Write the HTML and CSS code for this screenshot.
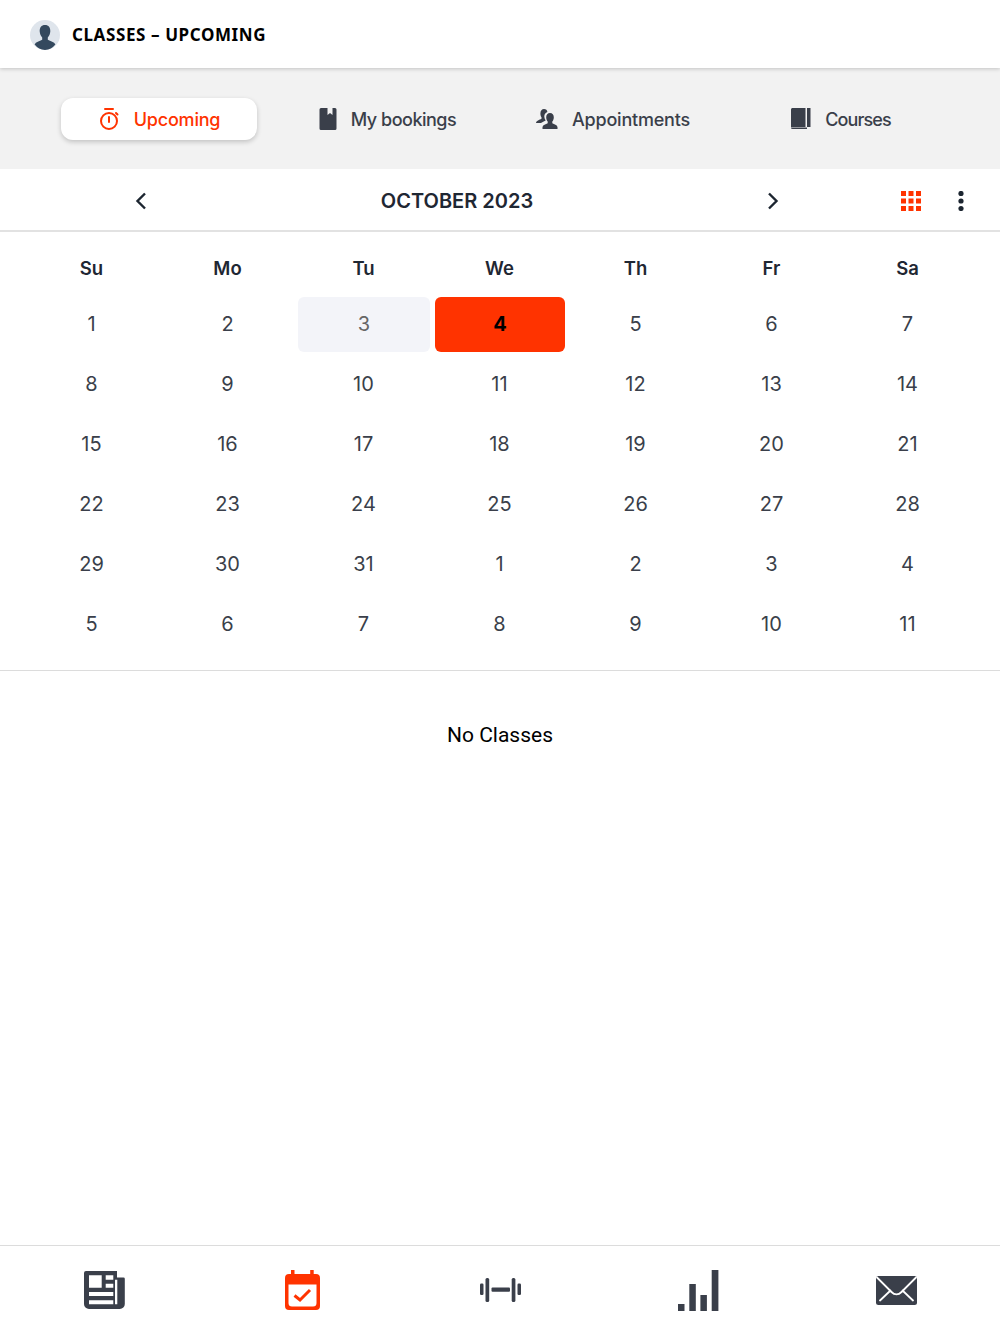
FILE: index.html
```html
<!DOCTYPE html>
<html>
<head>
    <title>Classes - Upcoming</title>
    <link rel="stylesheet" href="styles.css">
</head>
<body>
    <div class="page">
        <header class="top-bar">
            <svg class="avatar" viewBox="0 0 30 30">
                <circle cx="15" cy="15" r="15" fill="#dfe5ec"/>
                <path d="M15 5c3.6 0 5.6 2.7 5.3 6.600-.2 2.600-1.200 4.600-2.500 5.900v2.200c2.700 1.200 6.400 2.300 7.600 4.700A15 15 0 0 1 15 30a15 15 0 0 1-10.400-5.600c1.200-2.400 4.900-3.500 7.600-4.700v-2.200c-1.300-1.300-2.300-3.300-2.500-5.900C9.400 7.700 11.400 5 15 5z" fill="#34495e"/>
            </svg>
            <h1>CLASSES – UPCOMING</h1>
        </header>

        <nav class="tabs">
            <a class="tab active">
                <svg class="tab-icon" width="22" height="24" viewBox="0 0 22 24" fill="none" stroke="#ff3300" stroke-width="2">
                    <circle cx="11" cy="14" r="8"/>
                    <path d="M7 2h8M11 10v5M18 6l1.500 1.500" stroke-linecap="round"/>
                </svg>
                Upcoming
            </a>
            <a class="tab tab-bookings">
                <svg class="tab-icon" width="18" height="22" viewBox="0 0 18 22">
                    <path d="M2 0h6.500v7l2.500-2 2.500 2V0H16a1.500 1.500 0 0 1 1.500 1.500v19A1.500 1.500 0 0 1 16 22H2a1.500 1.500 0 0 1-1.500-1.500v-19A1.500 1.500 0 0 1 2 0z" fill="#3a3f4a"/>
                </svg>
                My bookings
            </a>
            <a class="tab">
                <svg class="tab-icon" width="22" height="20" viewBox="0 0 22 20">
                    <path d="M8 0c2 0 3.200 1.300 3.400 3-2 .6-3.200 2.400-3.100 4.700.1 1.500.6 2.800 1.400 3.800-1.800.9-3.300 1.500-4.700 2.500H0c.2-2.300 3.400-3 5.500-4.200V8.300C4.700 7.400 4.400 6 4.400 4.500 4.400 1.700 5.900 0 8 0z" fill="#3a3f4a"/>
                    <path d="M14 4c2.400 0 3.800 1.800 3.800 4.200 0 1.700-.5 3.200-1.500 4.300v1.800c2 1 4.700 1.500 5.200 3.700v2H6.500v-2c.5-2.200 3.200-2.700 5.200-3.700v-1.800c-1-1.100-1.500-2.600-1.500-4.300C10.200 5.800 11.600 4 14 4z" fill="#3a3f4a"/>
                </svg>
                Appointments
            </a>
            <a class="tab tab-courses">
                <svg class="tab-icon" width="20" height="22" viewBox="0 0 20 22">
                    <path d="M1.500 0H14.500V19H1.500C.7 19 0 19.500 0 20V1.500C0 .7.7 0 1.500 0z" fill="#3a3f4a"/>
                    <path d="M16 0h3.500v19H16zM0 20.500C0 20 .7 19.600 1.500 19.600H16v1.400H1.500z" fill="#3a3f4a"/>
                </svg>
                Courses
            </a>
        </nav>

        <div class="month-bar">
            <button class="chevron">
                <svg width="12" height="18" viewBox="0 0 12 18" fill="none" stroke="#1c2530" stroke-width="2.400"><path d="M10 1.500 2.500 9l7.500 7.500"/></svg>
            </button>
            <div class="month-title">OCTOBER 2023</div>
            <button class="chevron">
                <svg width="12" height="18" viewBox="0 0 12 18" fill="none" stroke="#1c2530" stroke-width="2.400"><path d="M2 1.500 9.500 9 2 16.500"/></svg>
            </button>
            <button class="bar-btn next-gap">
                <svg width="20" height="20" viewBox="0 0 20 20" fill="#ff3300">
                    <rect width="5" height="5"/><rect x="7.500" width="5" height="5"/><rect x="15" width="5" height="5"/>
                    <rect y="7.500" width="5" height="5"/><rect x="7.500" y="7.500" width="5" height="5"/><rect x="15" y="7.500" width="5" height="5"/>
                    <rect y="15" width="5" height="5"/><rect x="7.500" y="15" width="5" height="5"/><rect x="15" y="15" width="5" height="5"/>
                </svg>
            </button>
            <button class="bar-btn">
                <svg width="6" height="20" viewBox="0 0 6 20" fill="#1c2530"><circle cx="3" cy="2.500" r="2.600"/><circle cx="3" cy="10" r="2.600"/><circle cx="3" cy="17.500" r="2.600"/></svg>
            </button>
        </div>

        <section class="calendar">
            <div class="weekday">Su</div><div class="weekday">Mo</div><div class="weekday">Tu</div><div class="weekday">We</div><div class="weekday">Th</div><div class="weekday">Fr</div><div class="weekday">Sa</div>

            <div class="day">1</div><div class="day">2</div><div class="day today">3</div><div class="day selected">4</div><div class="day">5</div><div class="day">6</div><div class="day">7</div>
            <div class="day">8</div><div class="day">9</div><div class="day">10</div><div class="day">11</div><div class="day">12</div><div class="day">13</div><div class="day">14</div>
            <div class="day">15</div><div class="day">16</div><div class="day">17</div><div class="day">18</div><div class="day">19</div><div class="day">20</div><div class="day">21</div>
            <div class="day">22</div><div class="day">23</div><div class="day">24</div><div class="day">25</div><div class="day">26</div><div class="day">27</div><div class="day">28</div>
            <div class="day">29</div><div class="day">30</div><div class="day">31</div><div class="day">1</div><div class="day">2</div><div class="day">3</div><div class="day">4</div>
            <div class="day">5</div><div class="day">6</div><div class="day">7</div><div class="day">8</div><div class="day">9</div><div class="day">10</div><div class="day">11</div>
        </section>

        <main class="class-list">No Classes</main>

        <footer class="bottom-nav">
            <a class="nav-item">
                <svg width="41" height="38" viewBox="0 0 41 38">
                    <path d="M2 0h31v6.500h6.500a1.300 1.300 0 0 1 1.300 1.300V33a5 5 0 0 1-5 5H5a5 5 0 0 1-5-5V2a2 2 0 0 1 2-2z" fill="#3a3f4a"/>
                    <path d="M5 4.300h12.700v12.400H5zM21.700 4.300h7.600v4.400h-7.600zM21.700 12.700h7.600v4h-7.600zM5 21h24.300v4H5zM5 29.300h24.300v4H5zM31 8.700h2.300v24.600H31z" fill="#fff"/>
                </svg>
            </a>
            <a class="nav-item">
                <svg width="35" height="40" viewBox="0 0 35 40">
                    <path d="M6 0h3.500v4h15.700V0h3.500v4H31a4 4 0 0 1 4 4v28a4 4 0 0 1-4 4H4a4 4 0 0 1-4-4V8a4 4 0 0 1 4-4h2z" fill="#ff3300"/>
                    <path d="M3.500 14.500h28V33a3.500 3.500 0 0 1-3.500 3.500H7A3.500 3.500 0 0 1 3.500 33z" fill="#fff"/>
                    <path d="M9.500 25.500l5.500 4.500 10-10" fill="none" stroke="#ff3300" stroke-width="3"/>
                </svg>
            </a>
            <a class="nav-item">
                <svg width="41" height="24" viewBox="0 0 41 24" fill="#3a3f4a">
                    <rect x="0" y="5.500" width="3.500" height="11.500" rx="1.200"/>
                    <rect x="5.500" y="0" width="3.700" height="24" rx="1.500"/>
                    <rect x="11.500" y="9.500" width="18.500" height="4.200" rx="1"/>
                    <rect x="31.700" y="0" width="3.700" height="24" rx="1.500"/>
                    <rect x="37.500" y="5.500" width="3.500" height="11.500" rx="1.200"/>
                </svg>
            </a>
            <a class="nav-item">
                <svg width="41" height="41" viewBox="0 0 41 41" fill="#3a3f4a">
                    <rect x="0" y="34" width="6.500" height="7"/>
                    <rect x="11.300" y="14" width="6.500" height="27"/>
                    <rect x="22.400" y="25" width="6.500" height="16"/>
                    <rect x="33.700" y="0" width="6.700" height="41"/>
                </svg>
            </a>
            <a class="nav-item">
                <svg width="41" height="29" viewBox="0 0 41 29">
                    <rect width="41" height="29" rx="2.500" fill="#3a3f4a"/>
                    <path d="M1 1.500 15.500 16c3 3 7 3 10 0L40 1.500M4 24.500 14.500 14.500M37 24.500 26.500 14.500" fill="none" stroke="#fff" stroke-width="1.800" stroke-linecap="round"/>
                </svg>
            </a>
        </footer>
    </div>
</body>
</html>
```
FILE: styles.css
```css
:root {
    --accent: #ff3300;
    --ink: #1f2733;
    --muted-ink: #3a3f4a;
    --line: #dcdcdc;
    --band: #f2f2f2;
}

* {
    box-sizing: border-box;
}

html, body {
    margin: 0;
    height: 100%;
}

body {
    font-family: Inter, "Open Sans", "Liberation Sans", sans-serif;
    background: #fff;
    color: var(--ink);
}

.page {
    height: 1334px;
    display: flex;
    flex-direction: column;
}

.top-bar {
    position: relative;
    height: 68px;
    flex: none;
    display: flex;
    align-items: center;
    gap: 12px;
    padding-left: 30px;
    background: #fff;
    box-shadow: 0 1px 4px rgba(0,0,0,0.2);
}

.avatar {
    width: 30px;
    height: 30px;
    margin-top: 1px;
}

.top-bar h1 {
    margin: 0;
    font-family: "Noto Sans", "Open Sans", sans-serif;
    font-size: 17px;
    font-weight: 700;
    letter-spacing: 0.6px;
    color: #000;
}

.tabs {
    height: 101px;
    flex: none;
    display: grid;
    grid-template-columns: repeat(4, 196px);
    gap: 31px;
    padding: 30px 0 29px 61px;
    background: var(--band);
}

.tab {
    display: flex;
    align-items: center;
    justify-content: center;
    gap: 14px;
    height: 42px;
    font-size: 18px;
    font-weight: 500;
    letter-spacing: -0.2px;
    color: var(--muted-ink);
    border-radius: 12px;
}

.tab-bookings {
    padding-left: 3px;
    letter-spacing: -0.5px;
}

.tab-courses {
    padding-left: 2px;
    letter-spacing: -0.9px;
}

.tab.active {
    background: #fff;
    color: var(--accent);
    box-shadow: 0 2px 5px rgba(0,0,0,0.2);
}

.tab-icon {
    flex: none;
}

.month-bar {
    height: 63px;
    flex: none;
    display: flex;
    align-items: center;
    padding: 2px 14px 0 109px;
    border-bottom: 2px solid #e2e2e2;
}

.chevron, .bar-btn {
    padding: 0;
    border: none;
    background: none;
    display: flex;
    align-items: center;
    justify-content: center;
}

.chevron {
    width: 64px;
    height: 40px;
}

.bar-btn {
    width: 50px;
    height: 40px;
}

.next-gap {
    margin-left: 81px;
}

.month-title {
    flex: 1;
    text-align: center;
    font-size: 20px;
    font-weight: 600;
}

.calendar {
    flex: none;
    display: grid;
    grid-template-columns: repeat(7, 136px);
    grid-auto-rows: 60px;
    grid-template-rows: 52px;
    padding: 10px 0 16px 23.5px;
    border-bottom: 1px solid var(--line);
}

.weekday {
    display: flex;
    align-items: center;
    justify-content: center;
    font-size: 18.5px;
    font-weight: 600;
}

.day {
    display: flex;
    align-items: center;
    justify-content: center;
    margin: 3px 2.5px 2px;
    padding-bottom: 2px;
    font-size: 20px;
    font-weight: 400;
    color: var(--muted-ink);
    border-radius: 6px;
}

.day.today {
    margin-right: 1.5px;
    background: #f3f4f9;
    color: #666;
}

.day.selected {
    margin-left: 3.5px;
    background: var(--accent);
    color: #000;
    font-weight: 700;
}

.class-list {
    flex: 1;
    padding-top: 52px;
    text-align: center;
    font-family: Roboto, sans-serif;
    font-size: 21px;
    line-height: 25px;
    color: #000;
}

.bottom-nav {
    height: 89px;
    flex: none;
    display: grid;
    grid-template-columns: repeat(5, 198px);
    padding-left: 5.5px;
    border-top: 1px solid var(--line);
}

.nav-item {
    display: flex;
    align-items: center;
    justify-content: center;
}
```
